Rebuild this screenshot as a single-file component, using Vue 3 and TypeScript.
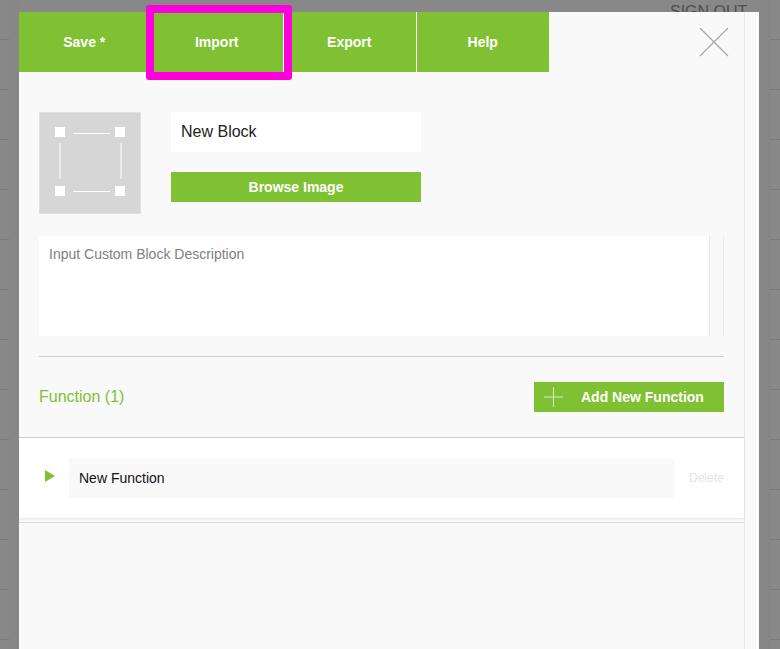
<script setup lang="ts">
const tabs: string[] = ['Save *', 'Import', 'Export', 'Help']
</script>

<template>
  <div class="page">
    <div class="backdrop">
      <span class="signout">SIGN OUT</span>
      <div class="shade shade-left"></div>
      <div class="shade shade-right"></div>
    </div>
    <div class="modal">
      <div class="main">
        <nav class="tabs">
          <button v-for="t in tabs" :key="t" class="tab" type="button">{{ t }}</button>
        </nav>
        <section class="top">
          <div class="row">
            <div class="thumb">
              <svg width="100" height="100" viewBox="0 0 100 100" fill="#fff">
                <rect x="15" y="14" width="10" height="10" />
                <rect x="75" y="14" width="10" height="10" />
                <rect x="15" y="73" width="10" height="10" />
                <rect x="75" y="73" width="10" height="10" />
                <rect x="33" y="20" width="37" height="1" />
                <rect x="33" y="78" width="37" height="1" />
                <rect x="19.5" y="30" width="1" height="36" />
                <rect x="80.5" y="30" width="1" height="36" />
              </svg>
            </div>
            <div class="fields">
              <div class="name">New Block</div>
              <button class="browse" type="button">Browse Image</button>
            </div>
          </div>
          <div class="desc">
            <div class="desc-text">Input Custom Block Description</div>
            <div class="scroll"></div>
          </div>
          <div class="rule"></div>
          <div class="fn-head">
            <span class="fn-title">Function (1)</span>
            <button class="add" type="button">
              <svg class="plus" width="20" height="20" viewBox="0 0 20 20">
                <path d="M0 10H19M9.5 0V20" stroke="#d8ecc0" stroke-width="1" fill="none" />
              </svg>
              <span>Add New Function</span>
            </button>
          </div>
        </section>
        <section class="fn-row">
          <svg class="arrow" width="10" height="12" viewBox="0 0 10 12">
            <path d="M0 0L10 6L0 12Z" fill="#80c033" />
          </svg>
          <div class="fn-name">New Function</div>
          <span class="delete">Delete</span>
        </section>
        <div class="rest"></div>
      </div>
    </div>
    <div class="highlight"></div>
    <svg class="close" width="30" height="30" viewBox="0 0 30 30">
      <path d="M1 1L29 29M29 1L1 29" stroke="#a3a3a3" stroke-width="1.1" fill="none" />
    </svg>
  </div>
</template>

<style>
html, body { margin: 0; padding: 0; background: #888; }
</style>

<style scoped>
.page {
  position: relative;
  width: 780px;
  height: 649px;
  overflow: hidden;
  background: #888;
  font-family: "Liberation Sans", Arial, sans-serif;
}
.backdrop {
  position: absolute;
  inset: 0;
  background-color: #888;
  background-image: repeating-linear-gradient(to bottom, transparent 0, transparent 39px, #7a7a7a 39px, #7a7a7a 40px, transparent 40px, transparent 50px);
}
.shade {
  position: absolute;
  top: 0;
  bottom: 0;
  width: 10px;
  background: #878787;
}
.shade-left { left: 9px; }
.shade-right { left: 759px; border-right: 1px solid #828282; }
.signout {
  position: absolute;
  left: 670px;
  top: 3px;
  font-size: 16px;
  line-height: 18px;
  color: #4f4f4f;
  white-space: nowrap;
}
.modal {
  position: absolute;
  left: 19px;
  top: 12px;
  width: 740px;
  height: 637px;
  background: #f9f9f9;
  display: flex;
}
.main {
  width: 725px;
  border-right: 1px solid #e8e8e8;
  display: flex;
  flex-direction: column;
}
.tabs { display: flex; height: 60px; width: 530px; flex: none; }
.tab {
  flex: 0 0 132.5px;
  box-sizing: border-box;
  margin: 0;
  padding: 0 1px 0 0;
  border: 0;
  border-right: 1px solid #fff;
  background: #80c033;
  color: #fff;
  font: bold 14px "Liberation Sans", Arial, sans-serif;
}
.tab:last-child { border-right: 0; padding-right: 0; }
.top {
  padding: 40px 20px 0;
  height: 366px;
  flex: none;
  box-sizing: border-box;
  border-bottom: 1px solid #d0d0d0;
}
.row { display: flex; gap: 30px; }
.thumb {
  width: 102px;
  height: 102px;
  box-sizing: border-box;
  background: #d6d6d6;
  border: 1px solid #e0e0e0;
}
.thumb svg { display: block; }
.fields { width: 250px; }
.name {
  height: 40px;
  line-height: 40px;
  padding-left: 10px;
  background: #fff;
  color: #222;
  font-size: 16px;
}
.browse {
  display: block;
  width: 100%;
  height: 30px;
  margin: 20px 0 0;
  padding: 0;
  border: 0;
  background: #80c033;
  color: #fff;
  font: bold 14px "Liberation Sans", Arial, sans-serif;
}
.desc { display: flex; height: 100px; margin-top: 22px; }
.desc-text {
  width: 670px;
  box-sizing: border-box;
  padding: 10px 10px 0;
  background: #fff;
  color: #808080;
  font-size: 14px;
  line-height: 16px;
}
.scroll {
  width: 15px;
  box-sizing: border-box;
  border-left: 1px solid #e6e6e6;
  border-right: 1px solid #ececec;
}
.rule { height: 1px; margin-top: 20px; background: #cfcfcf; }
.fn-head {
  display: flex;
  justify-content: space-between;
  align-items: center;
  margin-top: 25px;
}
.fn-title { color: #80c033; font-size: 16px; }
.add {
  display: flex;
  align-items: center;
  width: 190px;
  height: 30px;
  margin: 0;
  padding: 0 0 0 10px;
  box-sizing: border-box;
  border: 0;
  background: #80c033;
  color: #fff;
  font: bold 14px "Liberation Sans", Arial, sans-serif;
}
.plus { margin-right: 17px; flex: none; }
.fn-row {
  display: flex;
  align-items: center;
  height: 80px;
  flex: none;
  box-sizing: border-box;
  padding-left: 26px;
  background: #fff;
  box-shadow: 0 1px 2px rgba(0, 0, 0, 0.08);
}
.arrow { flex: none; margin: -4px 14px 0 0; }
.fn-name {
  width: 605px;
  height: 40px;
  box-sizing: border-box;
  padding-left: 10px;
  line-height: 40px;
  background: #f9f9f9;
  color: #111;
  font-size: 14px;
}
.delete { margin-left: 15px; color: #e4e4e4; font-size: 12px; }
.rest {
  flex: 1;
  margin-top: 4px;
  border-top: 1px solid #dcdcdc;
}
.highlight {
  position: absolute;
  left: 146px;
  top: 5px;
  width: 146px;
  height: 75px;
  box-sizing: border-box;
  border: 8px solid #ff00dc;
  border-radius: 3px;
}
.close { position: absolute; left: 699px; top: 27px; }
</style>
